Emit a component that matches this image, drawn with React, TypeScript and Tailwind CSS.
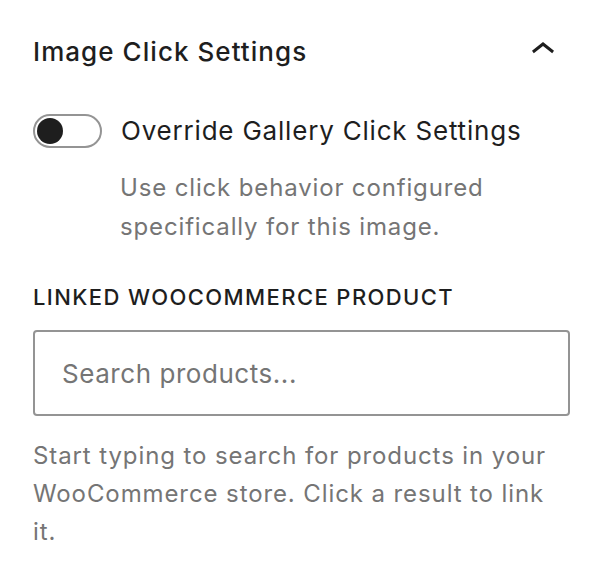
import React, { useState } from 'react';

const font = { fontFamily: 'Inter, "Liberation Sans", sans-serif' };

export default function App() {
  const [override, setOverride] = useState(false);
  const [query, setQuery] = useState('');

  return (
    <div className="min-h-[581px] w-[600px] bg-white pl-[33px] pr-[30px] pt-[26px] text-[#1e1e1e]" style={font}>
      {/* Panel header */}
      <div className="flex items-start justify-between">
        <h2 className="mt-[10px] text-[26px] leading-[32px] font-medium tracking-[1.05px]">Image Click Settings</h2>
        <svg className="mr-[3px] h-12 w-12" viewBox="0 0 24 24" fill="#1e1e1e">
          <path d="M6.5 12.4L12 8l5.5 4.4-.9 1.2L12 10l-4.6 3.6-.9-1.2z" />
        </svg>
      </div>

      {/* Override toggle */}
      <div className="mt-[40px] flex items-center gap-[19px]">
        <button
          onClick={() => setOverride(!override)}
          className="relative h-[34px] w-[69px] shrink-0 rounded-full border-2 border-[#949494] bg-white"
        >
          <span
            className={
              override
                ? 'absolute top-[2px] left-[37px] h-[26px] w-[26px] rounded-full bg-[#1e1e1e]'
                : 'absolute top-[2px] left-[2px] h-[26px] w-[26px] rounded-full bg-[#1e1e1e]'
            }
          />
        </button>
        <span className="text-[26px] leading-[34px] tracking-[0.8px]">Override Gallery Click Settings</span>
      </div>
      <p className="mt-[20px] ml-[87px] text-[24px] leading-[39px] tracking-[0.85px] text-[#757575]">
        Use click behavior configured
        <br />
        specifically for this image.
      </p>

      {/* Linked product */}
      <label className="mt-[38px] block text-[22px] leading-[26px] font-medium tracking-[1.4px] uppercase">
        Linked WooCommerce Product
      </label>
      <input
        value={query}
        onChange={(e) => setQuery(e.target.value)}
        placeholder="Search products..."
        className="mt-[20px] block h-[86px] w-[537px] rounded-[4px] border-2 border-[#949494] bg-white px-[27px] text-[26px] tracking-[0.55px] text-[#1e1e1e] outline-none placeholder:text-[#757575]"
      />
      <p className="mt-[21px] text-[24px] leading-[38px] tracking-[0.9px] text-[#757575]">
        Start typing to search for products in your WooCommerce store. Click a result to link it.
      </p>
    </div>
  );
}
